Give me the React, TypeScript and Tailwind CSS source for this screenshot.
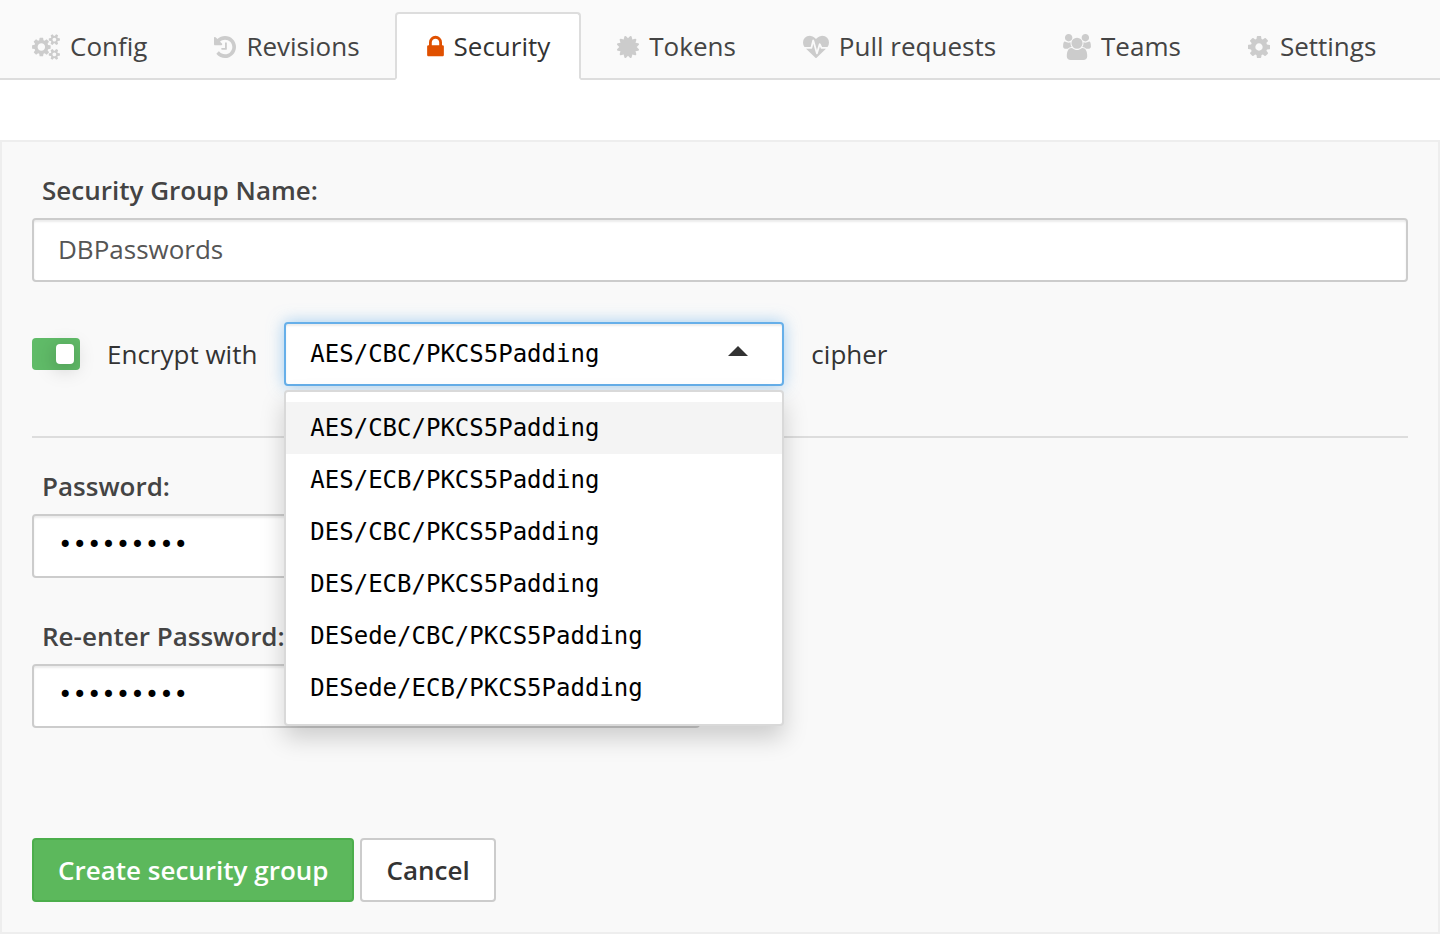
import { useState } from "react";

type IconProps = { className: string; viewBox: string; path: string };

function Icon({ className, viewBox, path }: IconProps) {
  return (
    <svg aria-hidden="true" viewBox={viewBox} className={`mt-0.5 shrink-0 ${className}`} fill="currentColor">
      <path d={path} />
    </svg>
  );
}

const COGS =
  "M832 896q0-106-75-181t-181-75-181 75-75 181 75 181 181 75 181-75 75-181zm768 512q0-52-38-90t-90-38-90 38-38 90q0 53 37.5 90.5t90.5 37.5 90.5-37.5 37.5-90.5zm0-1024q0-52-38-90t-90-38-90 38-38 90q0 53 37.5 90.5t90.5 37.5 90.5-37.5 37.5-90.5zm-384 421v185q0 10-7 19.5t-16 10.5l-155 24q-11 35-32 76 34 48 90 115 7 11 7 20 0 12-7 19-23 30-82.5 89.5t-78.5 59.5q-11 0-21-7l-115-90q-37 19-77 31-11 108-23 155-7 24-30 24h-186q-11 0-20-7.5t-10-17.5l-23-153q-34-10-75-31l-118 89q-7 7-20 7-11 0-21-8-144-133-144-160 0-9 7-19 10-14 41-53t47-61q-23-44-35-82l-152-24q-10-1-17-9.5t-7-19.5v-185q0-10 7-19.5t16-10.5l155-24q11-35 32-76-34-48-90-115-7-11-7-20 0-12 7-20 22-30 82-89t79-59q11 0 21 7l115 90q34-18 77-32 11-108 23-154 7-24 30-24h186q11 0 20 7.5t10 17.5l23 153q34 10 75 31l118-89q8-7 20-7 11 0 21 8 144 133 144 160 0 8-7 19-12 16-42 54t-45 60q23 48 34 82l152 23q10 2 17 10.5t7 19.5zm640 533v140q0 16-149 31-12 27-30 52 51 113 51 138 0 4-4 7-122 71-124 71-8 0-46-47t-52-68q-20 2-30 2t-30-2q-14 21-52 68t-46 47q-2 0-124-71-4-3-4-7 0-25 51-138-18-25-30-52-149-15-149-31v-140q0-16 149-31 13-29 30-52-51-113-51-138 0-4 4-7 4-2 35-20t59-34 30-16q8 0 46 46.5t52 67.5q20-2 30-2t30 2q51-71 92-112l6-2q4 0 124 70 4 3 4 7 0 25-51 138 17 23 30 52 149 15 149 31zm0-1024v140q0 16-149 31-12 27-30 52 51 113 51 138 0 4-4 7-122 71-124 71-8 0-46-47t-52-68q-20 2-30 2t-30-2q-14 21-52 68t-46 47q-2 0-124-71-4-3-4-7 0-25 51-138-18-25-30-52-149-15-149-31v-140q0-16 149-31 13-29 30-52-51-113-51-138 0-4 4-7 4-2 35-20t59-34 30-16q8 0 46 46.5t52 67.5q20-2 30-2t30 2q51-71 92-112l6-2q4 0 124 70 4 3 4 7 0 25-51 138 17 23 30 52 149 15 149 31z";
const HISTORY =
  "M1664 896q0 156-61 298t-164 245-245 164-298 61q-172 0-327-72.5t-264-204.5q-7-10-6.5-22.5t8.5-20.5l137-138q10-9 25-9 16 2 23 12 73 95 179 147t225 52q104 0 198.5-40.5t163.5-109.5 109.5-163.5 40.5-198.5-40.5-198.5-109.5-163.5-163.5-109.5-198.5-40.5q-98 0-188 35.5t-160 101.5l137 138q31 30 14 69-17 40-59 40h-448q-26 0-45-19t-19-45v-448q0-42 40-59 39-17 69 14l130 129q107-101 244.5-156.5t284.5-55.5q156 0 298 61t245 164 164 245 61 298zm-640-288v448q0 14-9 23t-23 9h-320q-14 0-23-9t-9-23v-64q0-14 9-23t23-9h224v-352q0-14 9-23t23-9h64q14 0 23 9t9 23z";
const LOCK =
  "M640 768h512v-192q0-106-75-181t-181-75-181 75-75 181v192zm832 96v576q0 40-28 68t-68 28h-960q-40 0-68-28t-28-68v-576q0-40 28-68t68-28h32v-192q0-184 132-316t316-132 316 132 132 316v192h32q40 0 68 28t28 68z";
const CERTIFICATE =
  "M1504 896l138 135q30 28 20 70-12 41-52 51l-188 48 53 186q12 41-19 70-29 31-70 19l-186-53-48 188q-10 40-51 52-12 2-19 2-31 0-51-22l-135-138-135 138q-28 30-70 20-41-11-51-52l-48-188-186 53q-41 12-70-19-31-29-19-70l53-186-188-48q-40-10-52-51-10-42 20-70l138-135-138-135q-30-28-20-70 12-41 52-51l188-48-53-186q-12-41 19-70 29-31 70-19l186 53 48-188q10-41 51-51 41-12 70 19l135 139 135-139q29-30 70-19 41 10 51 51l48 188 186-53q41-12 70 19 31 29 19 70l-53 186 188 48q40 10 52 51 10 42-20 70z";
const HEARTBEAT =
  "M1280 1009h305q-5 6-10 10.5t-9 7.5l-3 4-623 600q-18 18-44 18t-44-18l-624-602q-5-2-21-20h369q22 0 39.5-13.5t22.5-34.5l70-281 190 667q6 20 23 33t39 13q21 0 38-13t23-33l146-485 56 112q18 35 57 35zm512-413q0 145-103 300h-369l-111-221q-8-17-25.5-27t-36.5-8q-45 5-56 46l-129 430-196-686q-6-20-23.5-33t-39.5-13-39 13.5-22 34.5l-116 464h-423q-103-155-103-300 0-220 127-344t351-124q62 0 126.5 21.5t120 58 95.5 68.5 76 68q36-36 76-68t95.5-68.5 120-58 126.5-21.5q224 0 351 124t127 344z";
const USERS =
  "M657 896q-162 5-265 128h-134q-82 0-138-40.5t-56-118.5q0-353 124-353 6 0 43.5 21t97.5 42.5 119 21.5q67 0 133-23-5 37-5 66 0 139 81 256zm1071 637q0 120-73 189.5t-194 69.5h-874q-121 0-194-69.5t-73-189.5q0-53 3.5-103.5t14-109 26.5-108.5 43-97.5 62-81 85.5-53.5 111.5-20q10 0 43 21.5t73 48 107 48 135 21.5 135-21.5 107-48 73-48 43-21.5q61 0 111.5 20t85.5 53.5 62 81 43 97.5 26.5 108.5 14 109 3.5 103.5zm-1024-1277q0 106-75 181t-181 75-181-75-75-181 75-181 181-75 181 75 75 181zm704 384q0 159-112.5 271.5t-271.5 112.5-271.5-112.5-112.5-271.5 112.5-271.5 271.5-112.5 271.5 112.5 112.5 271.5zm576 225q0 78-56 118.5t-138 40.5h-134q-103-123-265-128 81-117 81-256 0-29-5-66 66 23 133 23 59 0 119-21.5t97.5-42.5 43.5-21q124 0 124 353zm-128-609q0 106-75 181t-181 75-181-75-75-181 75-181 181-75 181 75 75 181z";
const COG =
  "M1152 896q0-106-75-181t-181-75-181 75-75 181 75 181 181 75 181-75 75-181zm512-109v222q0 12-8 23t-20 13l-185 28q-19 54-39 91 35 50 107 138 10 12 10 25t-9 23q-27 37-99 108t-94 71q-12 0-26-9l-138-108q-44 23-91 38-16 136-29 186-7 28-36 28h-222q-14 0-24.5-8.5t-11.5-21.5l-28-184q-49-16-90-37l-141 107q-10 9-25 9-14 0-25-11-126-114-165-168-7-10-7-23 0-12 8-23 15-21 51-66.5t54-70.5q-27-50-41-99l-183-27q-13-2-21-12.5t-8-23.5v-222q0-12 8-23t19-13l186-28q14-46 39-92-40-57-107-138-10-12-10-24 0-10 9-23 26-36 98.5-107.5t94.5-71.5q13 0 26 10l138 107q44-23 91-38 16-136 29-186 7-28 36-28h222q14 0 24.5 8.5t11.5 21.5l28 184q49 16 90 37l142-107q9-9 24-9 13 0 25 10 129 119 165 170 7 8 7 22 0 12-8 23-15 21-51 66.5t-54 70.5q26 50 41 98l183 28q13 2 21 12.5t8 23.5z";

const TABS = [
  { label: "Config", path: COGS, viewBox: "-64 0 1920 1792", size: "h-[26px] w-7" },
  { label: "Revisions", path: HISTORY, viewBox: "128 0 1536 1792", size: "h-[26px] w-[22px]" },
  { label: "Security", path: LOCK, viewBox: "320 0 1152 1792", size: "h-[26px] w-[17px]" },
  { label: "Tokens", path: CERTIFICATE, viewBox: "128 0 1536 1792", size: "h-[26px] w-[22px]" },
  { label: "Pull requests", path: HEARTBEAT, viewBox: "0 0 1792 1792", size: "h-[26px] w-[26px]" },
  { label: "Teams", path: USERS, viewBox: "64 0 1920 1792", size: "h-[26px] w-7" },
  { label: "Settings", path: COG, viewBox: "128 0 1536 1792", size: "h-[26px] w-[22px]" },
];

const CIPHERS = [
  "AES/CBC/PKCS5Padding",
  "AES/ECB/PKCS5Padding",
  "DES/CBC/PKCS5Padding",
  "DES/ECB/PKCS5Padding",
  "DESede/CBC/PKCS5Padding",
  "DESede/ECB/PKCS5Padding",
];

const LABEL = "block px-2.5 leading-9 font-semibold text-[#444]";
const FIELD =
  "mt-2.5 block h-16 w-full rounded border-2 border-[#ccc] bg-white px-6 pb-0.5 shadow-[inset_0_2px_2px_rgba(0,0,0,0.075)] outline-none";
const MONO = "font-['DejaVu_Sans_Mono',monospace] text-2xl text-black";

function CipherPicker() {
  const [cipher, setCipher] = useState(CIPHERS[0]);
  return (
    <div className="relative w-[500px]">
      <select
        id="cipher"
        value={cipher}
        onChange={(e) => setCipher(e.target.value)}
        className={`block h-16 w-full appearance-none rounded border-2 border-[#66afe9] bg-white px-6 shadow-[inset_0_2px_2px_rgba(0,0,0,0.075),0_0_16px_rgba(102,175,233,0.6)] outline-none ${MONO}`}
      >
        {CIPHERS.map((c) => (
          <option key={c}>{c}</option>
        ))}
      </select>
      <svg
        aria-hidden="true"
        viewBox="0 0 20 10"
        className="pointer-events-none absolute top-6 right-9 h-2.5 w-5 fill-[#333]"
      >
        <path d="M0 10L10 0L20 10Z" />
      </svg>
      <ul
        role="listbox"
        aria-label="Cipher options"
        className={`absolute inset-x-0 top-[68px] z-10 rounded border-2 border-[#d9d9d9] bg-white py-2.5 shadow-[0_12px_24px_rgba(0,0,0,0.18)] ${MONO}`}
      >
        {CIPHERS.map((c) => (
          <li
            key={c}
            role="option"
            aria-selected={c === cipher}
            onClick={() => setCipher(c)}
            className="px-6 leading-[52px] aria-selected:bg-[#f4f4f4]"
          >
            {c}
          </li>
        ))}
      </ul>
    </div>
  );
}

export default function App() {
  return (
    <div className="min-h-screen bg-white font-['Open_Sans',sans-serif] text-[26px] text-[#333]">
      <nav className="border-b-2 border-[#ddd] bg-[#fafafa] pt-3">
        <ul className="-mb-0.5 flex gap-1">
          {TABS.map((tab) => {
            const active = tab.label === "Security";
            return (
              <li key={tab.label}>
                <a
                  href={`#${tab.label.toLowerCase().replace(" ", "-")}`}
                  aria-current={active ? "page" : undefined}
                  className={`flex h-[68px] items-center gap-2.5 rounded-t border-2 pr-[29px] pl-[30px] whitespace-nowrap ${
                    active ? "border-[#ddd] border-b-white bg-white text-[#333]" : "border-transparent text-[#444]"
                  }`}
                >
                  <Icon
                    path={tab.path}
                    viewBox={tab.viewBox}
                    className={`${tab.size} ${active ? "text-[#e05000]" : "text-[#ccc]"}`}
                  />
                  {tab.label}
                </a>
              </li>
            );
          })}
        </ul>
      </nav>

      <form
        className="mt-15 border-2 border-[#eee] bg-[#f9f9f9] p-[30px]"
        onSubmit={(e) => e.preventDefault()}
      >
        <label htmlFor="group-name" className={LABEL}>
          Security Group Name:
        </label>
        <input id="group-name" type="text" defaultValue="DBPasswords" className={`${FIELD} text-[#555]`} />

        <div className="mt-10 flex items-center">
          <input
            id="encrypt"
            type="checkbox"
            defaultChecked
            className="flex h-8 w-12 appearance-none items-center rounded bg-[#60bb68] px-1.5 before:h-5 before:w-[18px] before:rounded before:bg-white before:shadow-[0_4px_20px_rgba(0,0,0,0.25)] before:content-[''] checked:justify-end"
          />
          <label htmlFor="encrypt" className="mx-[27px]">
            Encrypt with
          </label>
          <CipherPicker />
          <label htmlFor="cipher" className="mx-[27px]">
            cipher
          </label>
        </div>

        <hr className="mt-[50px] border-t-2 border-[#ddd]" />

        <div className="mt-[30px] max-w-[668px]">
          <label htmlFor="password" className={LABEL}>
            Password:
          </label>
          <input id="password" type="password" defaultValue="secret123" className={`${FIELD} ${MONO}`} />
        </div>
        <div className="mt-10 max-w-[668px]">
          <label htmlFor="password-repeat" className={LABEL}>
            Re-enter Password:
          </label>
          <input id="password-repeat" type="password" defaultValue="secret123" className={`${FIELD} ${MONO}`} />
        </div>

        <div className="mt-[110px] flex gap-1.5">
          <button
            type="submit"
            className="h-16 rounded border-2 border-[#4cae4c] bg-[#5cb85c] px-6 font-semibold text-white"
          >
            Create security group
          </button>
          <button type="button" className="h-16 rounded border-2 border-[#ccc] bg-white px-6 font-semibold text-[#333]">
            Cancel
          </button>
        </div>
      </form>
    </div>
  );
}
